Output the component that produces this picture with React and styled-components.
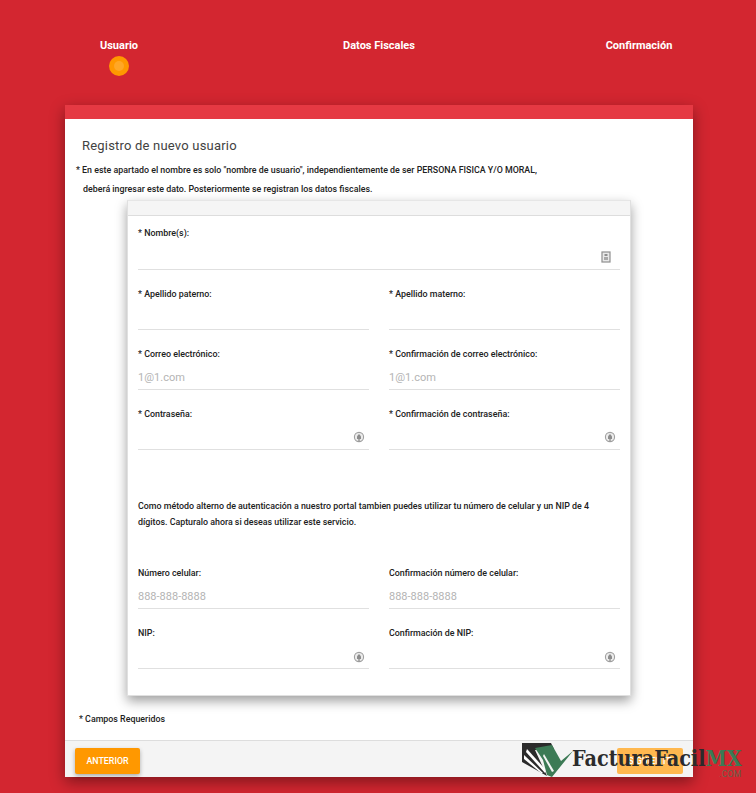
import React from "react";
import styled, { createGlobalStyle } from "styled-components";

const Global = createGlobalStyle`
  html, body {
    margin: 0;
    padding: 0;
    background: #d32630;
    font-family: Roboto, "Liberation Sans", sans-serif;
    overflow: hidden;
  }
`;

const Page = styled.div`
  width: 756px;
  height: 793px;
  box-sizing: border-box;
  padding: 0 63px 0 65px;
  background: #d32630;
  position: relative;
  overflow: hidden;
`;

const Steps = styled.div`
  height: 105px;
  margin: 0 -63px 0 -65px;
  padding: 39px 0 0 79px;
  box-sizing: border-box;
  display: flex;
  gap: 180px;
`;

const Step = styled.div`
  display: flex;
  flex-direction: column;
  align-items: center;
  color: #fff;
  font-size: 11px;
  font-weight: 700;
  line-height: 13px;
  height: 40px;
  width: 80px;
  white-space: nowrap;
`;

const Dot = styled.div`
  width: 20px;
  height: 20px;
  margin-top: 4px;
  border-radius: 50%;
  background: #ff9800;
  display: flex;
  align-items: center;
  justify-content: center;
  &::after {
    content: "";
    width: 10px;
    height: 10px;
    border-radius: 50%;
    background: #ffa726;
  }
`;

const Card = styled.div`
  width: 628px;
  height: 672px;
  background: #fff;
  box-shadow: 0 5px 14px rgba(0, 0, 0, 0.4);
  display: flex;
  flex-direction: column;
`;

const CardTop = styled.div`
  height: 14px;
  background: #e53943;
`;

const CardBody = styled.div`
  flex: 1;
  padding: 18px 0 0 11px;
  color: #212121;
`;

const Title = styled.h2`
  margin: 0 0 0 6px;
  font-size: 13px;
  font-weight: 400;
  line-height: 17px;
  letter-spacing: 0.2px;
  color: #424242;
`;

const Note = styled.p`
  margin: ${(p) => p.$top}px 0 0 ${(p) => p.$left}px;
  font-size: 8.85px;
  font-weight: 500;
  line-height: 12px;
`;

const FormCard = styled.div`
  width: 504px;
  height: 496px;
  margin: 5px 0 0 51px;
  box-sizing: border-box;
  border: 1px solid #e0e0e0;
  border-top-color: #e6e6e6;
  background: #fff;
  box-shadow: 0 5px 11px rgba(0, 0, 0, 0.38);
`;

const FormHead = styled.div`
  height: 15px;
  background: #f5f5f5;
  border-bottom: 1px solid #ddd;
  box-sizing: border-box;
`;

const Rows = styled.div`
  padding: 11px 10px 0 10px;
  display: flex;
  flex-direction: column;
`;

const Row = styled.div`
  display: grid;
  grid-template-columns: ${(p) => (p.$single ? "1fr" : "231px 231px")};
  column-gap: 20px;
  margin-top: ${(p) => p.$top || 0}px;
`;

const Field = styled.div`
  height: ${(p) => p.$h || 42}px;
  box-sizing: border-box;
  position: relative;
  border-bottom: 1px solid #e0e0e0;
`;

const Label = styled.label`
  display: block;
  font-size: 8.9px;
  font-weight: 500;
  line-height: 13px;
  color: #212121;
`;

const Value = styled.div`
  margin-top: 9px;
  font-size: 11px;
  line-height: 15px;
  color: #b4b4b4;
`;

const FieldIcon = styled.svg`
  position: absolute;
  right: ${(p) => p.$right}px;
  top: ${(p) => p.$top}px;
  width: 12px;
  height: 12px;
`;

const Help = styled.p`
  margin: 48px 0 37px;
  font-size: 8.85px;
  font-weight: 500;
  line-height: 16px;
  width: 470px;
  color: #212121;
`;

const Required = styled.div`
  margin: 17px 0 0 3px;
  font-size: 8.85px;
  font-weight: 500;
  line-height: 12px;
`;

const Footer = styled.div`
  height: 37px;
  box-sizing: border-box;
  background: #f4f4f4;
  border-top: 1px solid #ddd;
  padding: 7px 10px 0;
  display: flex;
  justify-content: space-between;
`;

const Button = styled.button`
  height: 26px;
  width: ${(p) => p.$w}px;
  border: 0;
  border-radius: 2px;
  padding: 0;
  background: ${(p) => (p.$faded ? "#ffb84f" : "#ff9800")};
  color: #fff;
  font-family: Roboto, sans-serif;
  font-size: 8.85px;
  font-weight: 500;
  box-shadow: ${(p) => (p.$faded ? "none" : "0 2px 4px rgba(0,0,0,0.3)")};
`;

const Logo = styled.div`
  position: absolute;
  left: 521px;
  top: 742px;
  width: 235px;
  height: 40px;
`;

const LogoMark = styled.svg`
  position: absolute;
  left: 0;
  top: 0;
  width: 56px;
  height: 36px;
`;

const LogoText = styled.span`
  position: absolute;
  left: 51px;
  top: 3px;
  font-family: "DejaVu Serif", serif;
  font-stretch: condensed;
  font-size: 21.4px;
  font-weight: 700;
  line-height: 28px;
  color: #2b2b2b;
  white-space: nowrap;
  & b {
    color: #3c7a55;
  }
`;

const LogoCom = styled.span`
  position: absolute;
  left: 198px;
  top: 28px;
  font-family: Roboto, sans-serif;
  font-size: 8.5px;
  line-height: 9px;
  letter-spacing: 0.4px;
  color: #3c7a55;
  opacity: 0.75;
`;

const ContactIcon = ({ $right, $top }) => (
  <FieldIcon $right={$right} $top={$top} viewBox="0 0 12 12">
    <rect x="2" y="1" width="8" height="10" fill="#e9e9e9" stroke="#8f8f8f" strokeWidth="1.2" />
    <rect x="4.5" y="3" width="3" height="2" fill="#8f8f8f" />
    <rect x="4" y="6" width="4" height="3" fill="#a9a9a9" />
  </FieldIcon>
);

const KeyIcon = ({ $right, $top }) => (
  <FieldIcon $right={$right} $top={$top} viewBox="0 0 12 12">
    <circle cx="6" cy="6" r="4.6" fill="#ececec" stroke="#a0a0a0" strokeWidth="1.1" />
    <path d="M4 5.2 L6 3 L8 5.2 V8 H4 Z" fill="#8c8c8c" />
    <rect x="5.2" y="8" width="1.6" height="3" fill="#9c9c9c" />
  </FieldIcon>
);

const TextField = ({ label, value, icon, h, right = 4, top = 23 }) => (
  <Field $h={h}>
    <Label>{label}</Label>
    {value && <Value>{value}</Value>}
    {icon === "contact" && <ContactIcon $right={right} $top={top} />}
    {icon === "key" && <KeyIcon $right={right} $top={top} />}
  </Field>
);

export default function App() {
  return (
    <Page>
      <Global />
      <Steps>
        <Step>
          Usuario
          <Dot />
        </Step>
        <Step>Datos Fiscales</Step>
        <Step>Confirmación</Step>
      </Steps>
      <Card>
        <CardTop />
        <CardBody>
          <Title>Registro de nuevo usuario</Title>
          <Note $top={10} $left={0}>
            * En este apartado el nombre es solo "nombre de usuario", independientemente de ser PERSONA FISICA Y/O MORAL,
          </Note>
          <Note $top={7} $left={7}>
            deberá ingresar este dato. Posteriormente se registran los datos fiscales.
          </Note>
          <FormCard>
            <FormHead />
            <Rows>
              <Row $single>
                <TextField label="* Nombre(s):" icon="contact" h={43} right={8} top={24} />
              </Row>
              <Row $top={18}>
                <TextField label="* Apellido paterno:" />
                <TextField label="* Apellido materno:" />
              </Row>
              <Row $top={18}>
                <TextField label="* Correo electrónico:" value="1@1.com" />
                <TextField label="* Confirmación de correo electrónico:" value="1@1.com" />
              </Row>
              <Row $top={18}>
                <TextField label="* Contraseña:" icon="key" />
                <TextField label="* Confirmación de contraseña:" icon="key" />
              </Row>
              <Help>
                Como método alterno de autenticación a nuestro portal tambien puedes utilizar tu número de celular y un NIP de 4 dígitos. Capturalo ahora si deseas utilizar este servicio.
              </Help>
              <Row>
                <TextField label="Número celular:" value="888-888-8888" />
                <TextField label="Confirmación número de celular:" value="888-888-8888" />
              </Row>
              <Row $top={18}>
                <TextField label="NIP:" icon="key" top={24} />
                <TextField label="Confirmación de NIP:" icon="key" top={24} />
              </Row>
            </Rows>
          </FormCard>
          <Required>* Campos Requeridos</Required>
        </CardBody>
        <Footer>
          <Button $w={65}>ANTERIOR</Button>
          <Button $w={66} $faded>SIGUIENTE</Button>
        </Footer>
      </Card>
      <Logo>
        <LogoMark viewBox="0 0 56 36">
          <path d="M1 1H30L33 7L14 8L26 34L1 20Z" fill="#2b2b2b" />
          <path d="M3 13L22 31L20 31L3 17Z" fill="#fff" />
          <path d="M6 7L24 27L24 31L5 10Z" fill="#fff" />
          <path d="M14 6L31 3L40 19L52 9L31 35L26 33L22 18Z" fill="#3c7a55" />
          <path d="M23 12L33 29L31 30L22 14Z" fill="#f4f4f4" />
        </LogoMark>
        <LogoText>
          FacturaFacil<b>MX</b>
        </LogoText>
        <LogoCom>.COM</LogoCom>
      </Logo>
    </Page>
  );
}
